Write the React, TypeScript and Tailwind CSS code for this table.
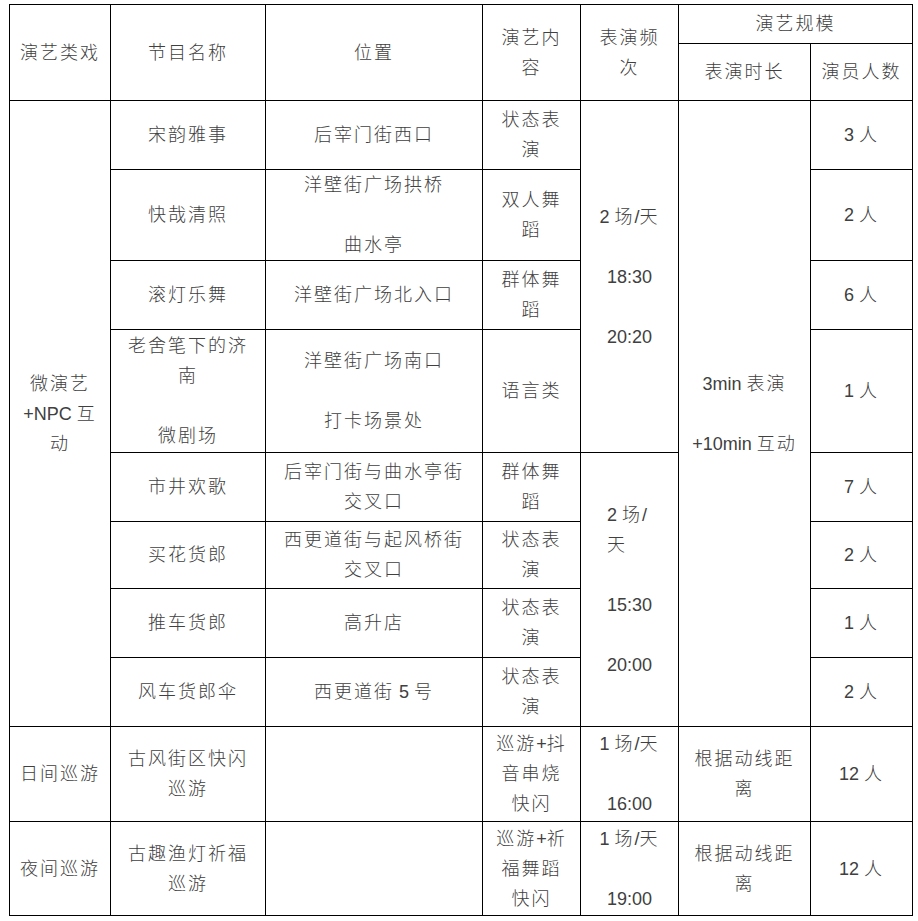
import React from "react";

const base =
  "flex flex-col justify-center border-r border-b border-black whitespace-nowrap";

function Txt({ s }: { s: string }) {
  const parts = s.split(/([\u4e00-\u9fff]+)/).filter((p) => p !== "");
  return (
    <>
      {parts.map((p, i) =>
        /[\u4e00-\u9fff]/.test(p) ? (
          <span key={i} className="tracking-[2px]">
            {p}
          </span>
        ) : (
          <span key={i} className="tracking-normal">
            {p}
          </span>
        )
      )}
    </>
  );
}

function Cell({
  pos,
  lines,
  left,
}: {
  pos: string;
  lines: string[];
  left?: boolean;
}) {
  return (
    <div
      className={`${base} ${pos} ${left ? "items-start pl-[26px] text-left" : "items-center text-center"}`}
    >
      {lines.map((l, i) => (
        <div key={i} className="h-[30px] leading-[30px]">
          {l === "" ? "\u00a0" : <Txt s={l} />}
        </div>
      ))}
    </div>
  );
}

export default function App() {
  return (
    <div className="min-h-screen bg-white pl-[9px] pt-[4px]">
      <div className="grid w-[904px] border-t border-l border-black text-[18px] text-[#404040] font-['Liberation_Sans','Noto_Sans_CJK_SC',sans-serif] font-light grid-cols-[101px_155px_217px_98px_98px_132px_102px] grid-rows-[39px_57px_69px_91px_69px_123px_69px_67px_69px_69px_95px_94px]">
        {/* header */}
        <Cell pos="col-start-1 row-start-1 row-span-2" lines={["演艺类戏"]} />
        <Cell pos="col-start-2 row-start-1 row-span-2" lines={["节目名称"]} />
        <Cell pos="col-start-3 row-start-1 row-span-2" lines={["位置"]} />
        <Cell pos="col-start-4 row-start-1 row-span-2" lines={["演艺内", "容"]} />
        <Cell pos="col-start-5 row-start-1 row-span-2" lines={["表演频", "次"]} />
        <Cell pos="col-start-6 col-span-2 row-start-1" lines={["演艺规模"]} />
        <Cell pos="col-start-6 row-start-2" lines={["表演时长"]} />
        <Cell pos="col-start-7 row-start-2" lines={["演员人数"]} />

        {/* category */}
        <Cell
          pos="col-start-1 row-start-3 row-span-8"
          lines={["微演艺", "+NPC 互", "动"]}
        />

        {/* names */}
        <Cell pos="col-start-2 row-start-3" lines={["宋韵雅事"]} />
        <Cell pos="col-start-2 row-start-4" lines={["快哉清照"]} />
        <Cell pos="col-start-2 row-start-5" lines={["滚灯乐舞"]} />
        <Cell
          pos="col-start-2 row-start-6"
          lines={["老舍笔下的济", "南", "", "微剧场"]}
        />
        <Cell pos="col-start-2 row-start-7" lines={["市井欢歌"]} />
        <Cell pos="col-start-2 row-start-8" lines={["买花货郎"]} />
        <Cell pos="col-start-2 row-start-9" lines={["推车货郎"]} />
        <Cell pos="col-start-2 row-start-10" lines={["风车货郎伞"]} />

        {/* locations */}
        <Cell pos="col-start-3 row-start-3" lines={["后宰门街西口"]} />
        <Cell
          pos="col-start-3 row-start-4"
          lines={["洋壁街广场拱桥", "", "曲水亭"]}
        />
        <Cell pos="col-start-3 row-start-5" lines={["洋壁街广场北入口"]} />
        <Cell
          pos="col-start-3 row-start-6"
          lines={["洋壁街广场南口", "", "打卡场景处"]}
        />
        <Cell
          pos="col-start-3 row-start-7"
          lines={["后宰门街与曲水亭街", "交叉口"]}
        />
        <Cell
          pos="col-start-3 row-start-8"
          lines={["西更道街与起风桥街", "交叉口"]}
        />
        <Cell pos="col-start-3 row-start-9" lines={["高升店"]} />
        <Cell pos="col-start-3 row-start-10" lines={["西更道街 5 号"]} />

        {/* content */}
        <Cell pos="col-start-4 row-start-3" lines={["状态表", "演"]} />
        <Cell pos="col-start-4 row-start-4" lines={["双人舞", "蹈"]} />
        <Cell pos="col-start-4 row-start-5" lines={["群体舞", "蹈"]} />
        <Cell pos="col-start-4 row-start-6" lines={["语言类"]} />
        <Cell pos="col-start-4 row-start-7" lines={["群体舞", "蹈"]} />
        <Cell pos="col-start-4 row-start-8" lines={["状态表", "演"]} />
        <Cell pos="col-start-4 row-start-9" lines={["状态表", "演"]} />
        <Cell pos="col-start-4 row-start-10" lines={["状态表", "演"]} />

        {/* frequency */}
        <Cell
          pos="col-start-5 row-start-3 row-span-4"
          lines={["2 场/天", "", "18:30", "", "20:20"]}
        />
        <Cell
          pos="col-start-5 row-start-7 row-span-4"
          left
          lines={["2 场/", "天", "", "15:30", "", "20:00"]}
        />

        {/* duration */}
        <Cell
          pos="col-start-6 row-start-3 row-span-8"
          lines={["3min 表演", "", "+10min 互动"]}
        />

        {/* performers */}
        <Cell pos="col-start-7 row-start-3" lines={["3 人"]} />
        <Cell pos="col-start-7 row-start-4" lines={["2 人"]} />
        <Cell pos="col-start-7 row-start-5" lines={["6 人"]} />
        <Cell pos="col-start-7 row-start-6" lines={["1 人"]} />
        <Cell pos="col-start-7 row-start-7" lines={["7 人"]} />
        <Cell pos="col-start-7 row-start-8" lines={["2 人"]} />
        <Cell pos="col-start-7 row-start-9" lines={["1 人"]} />
        <Cell pos="col-start-7 row-start-10" lines={["2 人"]} />

        {/* day parade */}
        <Cell pos="col-start-1 row-start-11" lines={["日间巡游"]} />
        <Cell pos="col-start-2 row-start-11" lines={["古风街区快闪", "巡游"]} />
        <Cell pos="col-start-3 row-start-11" lines={[]} />
        <Cell
          pos="col-start-4 row-start-11"
          lines={["巡游+抖", "音串烧", "快闪"]}
        />
        <Cell pos="col-start-5 row-start-11" lines={["1 场/天", "", "16:00"]} />
        <Cell pos="col-start-6 row-start-11" lines={["根据动线距", "离"]} />
        <Cell pos="col-start-7 row-start-11" lines={["12 人"]} />

        {/* night parade */}
        <Cell pos="col-start-1 row-start-12" lines={["夜间巡游"]} />
        <Cell pos="col-start-2 row-start-12" lines={["古趣渔灯祈福", "巡游"]} />
        <Cell pos="col-start-3 row-start-12" lines={[]} />
        <Cell
          pos="col-start-4 row-start-12"
          lines={["巡游+祈", "福舞蹈", "快闪"]}
        />
        <Cell pos="col-start-5 row-start-12" lines={["1 场/天", "", "19:00"]} />
        <Cell pos="col-start-6 row-start-12" lines={["根据动线距", "离"]} />
        <Cell pos="col-start-7 row-start-12" lines={["12 人"]} />
      </div>
    </div>
  );
}
